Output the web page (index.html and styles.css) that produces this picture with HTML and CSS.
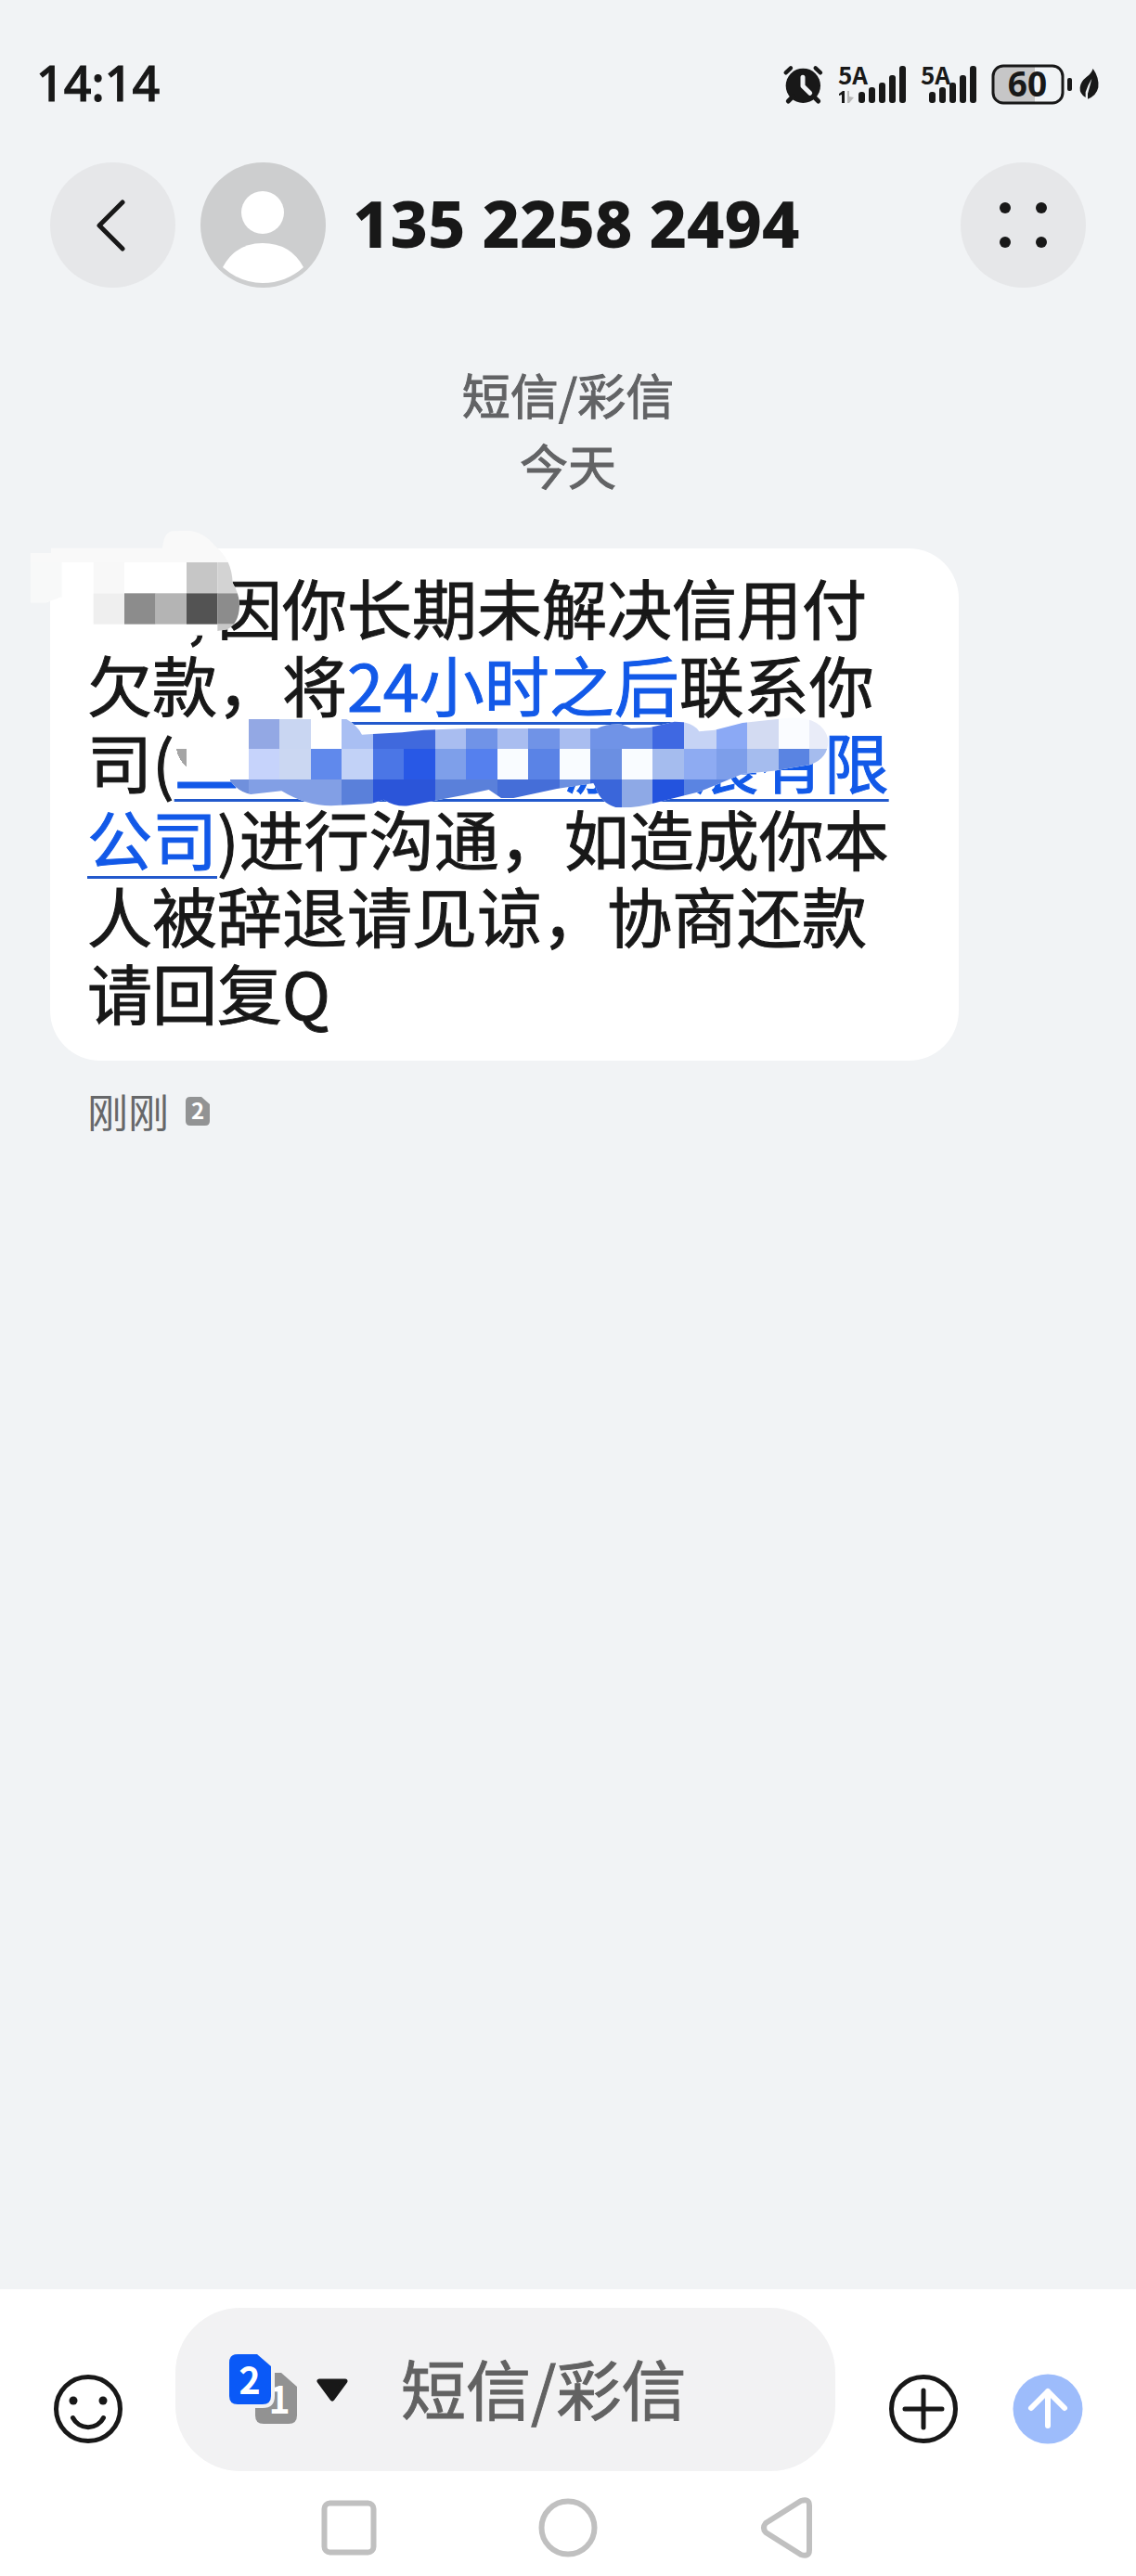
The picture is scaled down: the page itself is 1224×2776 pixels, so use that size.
FILE: index.html
```html
<!DOCTYPE html>
<html lang="zh-CN">
<head>
<meta charset="utf-8">
<meta name="viewport" content="width=device-width, initial-scale=1">
<title>135 2258 2494</title>
<link rel="stylesheet" href="styles.css">
</head>
<body>
<div class="screen">
  <div class="status">
    <time class="clock">14:14</time>
    <div class="status-icons">
      <svg width="43" height="44" viewBox="0 0 129 132" fill="#181818" aria-hidden="true">
        <circle cx="64" cy="70" r="56"/>
        <g fill="none" stroke="#181818" stroke-linecap="round">
          <path d="M8 28 24 13M120 28 104 13" stroke-width="13"/>
          <path d="M16 120 32 104M113 120 97 104" stroke-width="15"/>
        </g>
        <path d="M63 43V71L86 94" fill="none" stroke="#f1f3f5" stroke-width="15" stroke-linecap="round" stroke-linejoin="round"/>
      </svg>
      <svg width="73" height="44" viewBox="0 0 73 44" fill="#181818" aria-hidden="true">
        <text x="0" y="22" class="net">5A</text>
        <path d="M1 32 5 29H7V42H4V33L1 34Z"/>
        <path d="M10 29H12V35L17 36 12 42H10Z" fill="#b8b8b8"/>
        <rect x="22" y="30" width="7" height="12" rx="3"/><rect x="33" y="25" width="7" height="17" rx="3"/><rect x="44" y="20" width="7" height="22" rx="3"/><rect x="55" y="12" width="7" height="30" rx="3"/><rect x="66" y="2" width="7" height="40" rx="3"/>
      </svg>
      <svg width="60" height="44" viewBox="0 0 60 44" fill="#181818" aria-hidden="true">
        <text x="0" y="22" class="net">5A</text>
        <rect x="9" y="30" width="7" height="12" rx="3"/><rect x="20" y="25" width="7" height="17" rx="3"/><rect x="31" y="20" width="7" height="22" rx="3"/><rect x="42" y="12" width="7" height="30" rx="3"/><rect x="53" y="2" width="7" height="40" rx="3"/>
      </svg>
      <svg width="87" height="44" viewBox="0 0 87 44" fill="#181818" aria-hidden="true">
        <path d="M12 2H47V42H12Q2 42 2 32V12Q2 2 12 2Z" fill="#c6c6c7"/>
        <rect x="2" y="2" width="75" height="40" rx="11" fill="none" stroke="#181818" stroke-width="3"/>
        <text x="39" y="35" class="charge">60</text>
        <rect x="82" y="15" width="5" height="14" rx="2"/>
      </svg>
      <svg class="leaf" width="21" height="44" viewBox="0 0 63 132" fill="#181818" aria-hidden="true">
        <path d="M44 15Q65 45 61 76 55 103 27 113L27 96Q34 72 40 47 26 70 20 91L20 108Q0 97 2 76 4 57 22 43 38 32 44 15Z"/>
      </svg>
    </div>
  </div>

  <header class="header">
    <button class="round" aria-label="返回">
      <svg width="40" height="60" viewBox="0 0 40 60" fill="none" stroke="#181818" stroke-width="5" stroke-linecap="round" stroke-linejoin="round"><path d="M30 5 5 30 30 55"/></svg>
    </button>
    <svg class="avatar" width="135" height="135" viewBox="0 0 135 135" role="img" aria-label="联系人">
      <circle cx="67.500" cy="67.500" r="67.500" fill="#cdcecf"/>
      <circle cx="67" cy="54" r="23" fill="#fff"/>
      <path d="M24 113Q38 87 67 87 97 87 111 113 92 130 67 130 43 130 24 113Z" fill="#fff"/>
    </svg>
    <h1 class="title">135 2258 2494</h1>
    <button class="round" aria-label="更多">
      <svg width="52" height="52" viewBox="0 0 52 52" fill="#181818"><circle cx="6" cy="7" r="6"/><circle cx="45" cy="7" r="6"/><circle cx="6" cy="44" r="6"/><circle cx="45" cy="44" r="6"/></svg>
    </button>
  </header>

  <main class="thread">
    <div class="stamp">短信/彩信<br>今天</div>
    <div class="bubble">
      <p class="text"><span class="name">,</span>因你长期未解决信用付欠款，将<a href="#">24小时之后</a>联系你司(<a href="#">二　　　　　游　展有限公司</a>)进行沟通，如造成你本人被辞退请见谅，协商还款请回复Q</p>
      <svg class="mask mask-name" width="234" height="126" viewBox="30 30 702 378" aria-hidden="true">
        <defs><clipPath id="brush-a"><path d="M38 108H105V92H465Q470 38 500 37L550 35Q600 40 635 85 690 130 692 205 714 240 714 280 712 335 675 355L642 360 630 374 570 374 430 400H270L232 340 138 250 90 268H38Z"/></clipPath></defs>
        <g clip-path="url(#brush-a)">
          <rect x="30" y="30" width="700" height="108" fill="#f9f9f9"/>
          <rect x="30" y="138" width="700" height="270" fill="#fff"/>
          <rect x="38" y="138" width="102" height="135" fill="#f8f9f9"/>
          <rect x="242" y="138" width="100" height="100" fill="#f8f8f8"/>
          <rect x="543" y="138" width="100" height="100" fill="#c6c6c6"/>
          <rect x="643" y="138" width="80" height="100" fill="#d3d3d3"/>
          <rect x="242" y="238" width="100" height="100" fill="#efefef"/>
          <rect x="342" y="238" width="101" height="100" fill="#8c8c8c"/>
          <rect x="443" y="238" width="100" height="100" fill="#b4b4b4"/>
          <rect x="543" y="238" width="100" height="100" fill="#535353"/>
          <rect x="643" y="238" width="80" height="100" fill="#8c8c8c"/>
          <rect x="643" y="338" width="80" height="30" fill="#c8c8c8"/>
        </g>
      </svg>
      <svg class="mask mask-company" width="704" height="102" viewBox="510 630 2112 306" shape-rendering="crispEdges" aria-hidden="true">
        <defs><clipPath id="brush-b"><path d="M510 645H1060Q1095 665 1110 695L1145 693 1240 688 1310 680 1450 675H1870Q1900 660 1950 662L1980 675 2040 672 2120 653 2150 655Q2190 665 2200 685L2250 680 2340 657 2500 640Q2600 640 2617 710 2620 770 2560 792L2440 812 2340 822 2200 880 2060 915Q1990 935 1930 930 1880 915 1865 865L1858 852 1740 870 1600 900H1560L1520 873 1440 890 1260 925Q1220 930 1180 905L1140 918 1010 925Q930 925 850 877L750 888Q710 880 683 843L510 845Z"/></clipPath></defs>
        <g clip-path="url(#brush-b)">
          <rect x="510" y="630" width="2112" height="306" fill="#fff"/>
          <path fill="#a5a5a5" d="M510 741H543V798Q515 775 510 741Z"/>
          <path fill="#93a8e4" d="M744 641H844V741H744Z"/>
          <path fill="#c9d6f2" d="M844 641H944V741H844Z"/>
          <path fill="#a9bff3" d="M1045 641H1145V741H1045Z"/>
          <path fill="#4069dd" d="M1145 641H1347V741H1145Z"/>
          <path fill="#a9bdf0" d="M1347 641H1447V741H1347ZM1548 641H1648V741H1548ZM1748 641H1849V741H1748Z"/>
          <path fill="#7093e7" d="M1447 641H1548V741H1447ZM1648 641H1748V741H1648ZM1849 641H2050V741H1849Z"/>
          <path fill="#3f68e2" d="M2050 641H2150V741H2050Z"/>
          <path fill="#c6d3f5" d="M2150 641H2255V741H2150Z"/>
          <path fill="#8ba9f5" d="M2255 641H2356V741H2255Z"/>
          <path fill="#d3dbf2" d="M2356 641H2456V741H2356Z"/>
          <path fill="#fafcff" d="M2456 636H2556V741H2456Z"/>
          <path fill="#e9ecf8" d="M2556 636H2622V741H2556Z"/>
          <path fill="#c6d3fb" d="M744 741H844V841H744Z"/>
          <path fill="#cbd7f2" d="M844 741H944V841H844Z"/>
          <path fill="#6089ec" d="M944 741H1045V841H944Z"/>
          <path fill="#c2d2f7" d="M1045 741H1145V841H1045Z"/>
          <path fill="#4b76e6" d="M1145 741H1246V841H1145Z"/>
          <path fill="#2858e6" d="M1246 741H1347V841H1246Z"/>
          <path fill="#7e9fea" d="M1347 741H1447V841H1347Z"/>
          <path fill="#5580ee" d="M1447 741H1548V841H1447Z"/>
          <path fill="#f9fcff" d="M1548 741H1648V841H1548ZM1748 741H1849V841H1748ZM1949 741H2050V841H1949Z"/>
          <path fill="#5a83e6" d="M1648 741H1748V841H1648Z"/>
          <path fill="#6b8fe2" d="M1849 741H1949V841H1849Z"/>
          <path fill="#a5bcee" d="M2050 741H2150V841H2050ZM2356 741H2456V841H2356ZM2556 741H2622V841H2556Z"/>
          <path fill="#8eabf2" d="M2150 741H2255V841H2150Z"/>
          <path fill="#7d9eea" d="M2255 741H2356V841H2255Z"/>
          <path fill="#5a84e2" d="M2456 741H2556V841H2456Z"/>
          <path fill="#7090dc" d="M683 841H744V936H683Z"/>
          <path fill="#829fe5" d="M744 841H1045V936H744Z"/>
          <path fill="#5a80da" d="M1045 841H1145V936H1045ZM1347 841H1548V936H1347Z"/>
          <path fill="#2b55d9" d="M1145 841H1347V936H1145Z"/>
          <path fill="#456ed8" d="M1548 841H1748V936H1548Z"/>
          <path fill="#6b90e0" d="M1748 841H1849V936H1748Z"/>
          <path fill="#3a66da" d="M1849 841H1949V936H1849Z"/>
          <path fill="#8ea9e6" d="M1949 841H2050V936H1949Z"/>
          <path fill="#2353de" d="M2050 841H2150V936H2050Z"/>
          <path fill="#5a84e2" d="M2150 841H2356V936H2150Z"/>
        </g>
      </svg>
    </div>
    <div class="meta">
      <span>刚刚</span>
      <svg width="26" height="31" viewBox="0 0 26 31" role="img" aria-label="卡2"><path d="M5 0H17L26 8V26Q26 31 21 31H5Q0 31 0 26V5Q0 0 5 0Z" fill="#929394"/><text x="13" y="24" class="sim-small">2</text></svg>
    </div>
  </main>

  <footer class="footer">
    <form class="composer">
      <button type="button" class="icon" aria-label="表情">
        <svg width="76" height="76" viewBox="0 0 76 76" fill="none" stroke="#181818" stroke-width="5" stroke-linecap="round"><circle cx="38" cy="38" r="34.500"/><path d="M21.500 47.500A18.500 18.500 0 0 0 54.500 47.500"/><g fill="#181818" stroke="none"><circle cx="22" cy="29" r="4.500"/><circle cx="54" cy="29" r="4.500"/></g></svg>
      </button>
      <div class="field">
        <button type="button" class="sim" aria-label="选择SIM卡">
          <svg width="130" height="76" viewBox="0 0 130 76">
            <path d="M34 20H56L73 35V66Q73 75 64 75H37Q28 75 28 66V50Z" fill="#929292"/>
            <text x="54" y="63" class="sim-digit">1</text>
            <path d="M9 0H30L45 13V45Q45 54 36 54H9Q0 54 0 45V9Q0 0 9 0Z" fill="#0a59f7" stroke="#f2f2f3" stroke-width="8" paint-order="stroke"/>
            <text x="22" y="42" class="sim-digit">2</text>
            <path d="M97 29H125L111 48Z" fill="#181818" stroke="#181818" stroke-width="5" stroke-linejoin="round"/>
          </svg>
        </button>
        <input class="input" type="text" placeholder="短信/彩信" aria-label="短信/彩信">
      </div>
      <button type="button" class="icon" aria-label="添加">
        <svg width="76" height="76" viewBox="0 0 76 76" fill="none" stroke="#181818" stroke-width="5" stroke-linecap="round"><circle cx="38" cy="38" r="34.500"/><path d="M38 18V58M18 38H58"/></svg>
      </button>
      <button type="submit" class="icon" aria-label="发送">
        <svg width="76" height="76" viewBox="0 0 76 76" fill="none" stroke="#fff" stroke-width="6" stroke-linecap="round" stroke-linejoin="round"><circle cx="38" cy="38" r="37.500" fill="#9dbcfb" stroke="none"/><path d="M38 56V19M20 37 38 19 56 37"/></svg>
      </button>
    </form>
    <nav class="nav">
      <button class="icon" aria-label="最近任务"><svg width="66" height="66" viewBox="0 0 66 66" fill="none" stroke="#c0c0c0" stroke-width="6"><rect x="6.500" y="6.500" width="53" height="53" rx="6"/></svg></button>
      <button class="icon" aria-label="主屏幕"><svg width="66" height="66" viewBox="0 0 66 66" fill="none" stroke="#c0c0c0" stroke-width="6"><circle cx="33" cy="33" r="28.500"/></svg></button>
      <button class="icon" aria-label="返回上一级"><svg width="66" height="66" viewBox="0 0 66 66" fill="none" stroke="#c0c0c0" stroke-width="6" stroke-linejoin="round"><path d="M10 28 48 4Q57 1 57 9V57Q57 65 48 62L10 38Q6 33 10 28Z"/></svg></button>
    </nav>
  </footer>
</div>
</body>
</html>
```
FILE: styles.css
```css
* { box-sizing: border-box; }

body {
  margin: 0;
  background: #f1f3f5;
  color: #181818;
  font-family: "Noto Sans CJK SC", "Noto Sans", sans-serif;
}

button {
  border: 0;
  padding: 0;
  background: none;
  cursor: pointer;
}

svg {
  display: block;
  flex: none;
  overflow: visible;
}

.screen {
  min-height: 100vh;
  display: flex;
  flex-direction: column;
}

/* Status bar */
.status {
  display: flex;
  align-items: center;
  justify-content: space-between;
  height: 175px;
  padding: 7px 40px 0 39px;
}

.clock {
  padding-bottom: 4px;
  font: 500 52px/60px "Noto Sans", sans-serif;
  -webkit-text-stroke: 1px currentColor;
}

.status-icons {
  display: flex;
  align-items: center;
  gap: 16px;
}

.leaf { margin-left: -8px; }

.net { font-size: 26px; font-weight: 700; }

.charge {
  font: 700 37px "Noto Sans", sans-serif;
  text-anchor: middle;
}

/* Header */
.header {
  display: flex;
  align-items: center;
  padding: 0 54px;
}

.round {
  display: flex;
  flex: none;
  align-items: center;
  justify-content: center;
  width: 135px;
  height: 135px;
  border-radius: 50%;
  background: #e6e7e9;
}

.avatar { margin-left: 27px; }

.title {
  flex: 1;
  margin: 0 0 0 29px;
  padding-bottom: 6px;
  font: 800 70px/80px "Noto Sans", sans-serif;
}

/* Conversation */
.thread {
  flex: 1;
  padding: 77px 54px;
}

.stamp {
  margin-bottom: 52px;
  color: #626365;
  font-size: 52px;
  line-height: 76px;
  text-align: center;
  -webkit-text-stroke: 1px currentColor;
}

.bubble {
  position: relative;
  width: fit-content;
  max-width: 80vw;
  padding: 21px 40px 33px;
  border-radius: 54px;
  background: #fff;
}

.text {
  margin: 0;
  font-size: 70px;
  line-height: 83px;
  -webkit-text-stroke: 1px currentColor;
}

.text a {
  color: #1259e8;
  text-decoration: underline;
  text-decoration-color: #2259cc;
  text-decoration-thickness: 3px;
  text-decoration-skip-ink: none;
  text-underline-offset: 11px;
}

.name {
  display: inline-block;
  width: 2em;
  padding-right: 12px;
  text-align: right;
}

.mask { position: absolute; }
.mask-name { left: -24px; top: -21px; }
.mask-company { left: 136px; top: 179px; }

.meta {
  display: flex;
  align-items: center;
  gap: 18px;
  margin-top: 24px;
  padding-left: 40px;
  color: #666769;
  font-size: 44px;
  line-height: 60px;
}

.sim-small {
  fill: #fff;
  font-size: 24px;
  font-weight: 700;
  text-anchor: middle;
}

/* Composer */
.footer {
  padding: 20px 57px 19px;
  background: #fff;
}

.composer {
  display: flex;
  align-items: center;
  margin: 0;
}

.icon {
  flex: none;
}

.composer > .icon { margin-top: 42px; }

.field {
  display: flex;
  flex: 1;
  align-items: center;
  min-width: 0;
  height: 176px;
  margin: 0 57px 0 56px;
  padding: 0 58px;
  border-radius: 70px;
  background: #f2f2f3;
}

.sim-digit {
  fill: #fff;
  stroke: #fff;
  stroke-width: 2px;
  font-size: 38px;
  text-anchor: middle;
}

.sim {
  font-family: "Noto Sans CJK SC", sans-serif;
}

.input {
  flex: 1;
  min-width: 0;
  height: 100px;
  margin-left: 55px;
  padding: 0 0 6px;
  border: 0;
  outline: 0;
  background: none;
  font: inherit;
  font-size: 70px;
  -webkit-text-stroke: 1px currentColor;
}

.input::placeholder { color: #626262; opacity: 1; }

.composer > .icon + .icon { margin-left: 58px; }

/* System navigation */
.nav {
  display: flex;
  justify-content: center;
  gap: 170px;
  margin-top: 28px;
}
```
